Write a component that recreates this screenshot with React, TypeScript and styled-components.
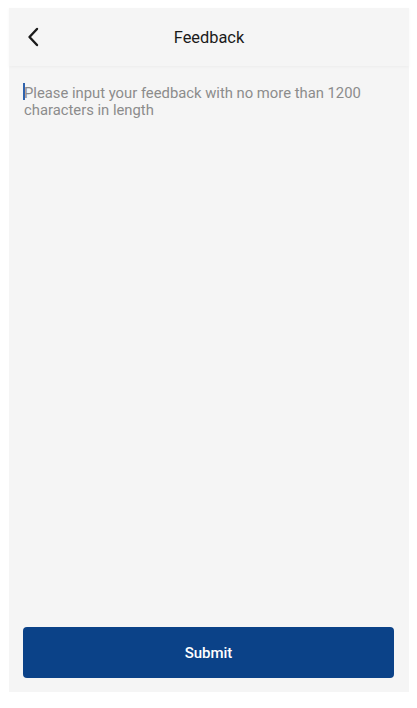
import styled, { createGlobalStyle } from 'styled-components';

const GlobalStyle = createGlobalStyle`
  html, body {
    margin: 0;
    padding: 0;
    background: #ffffff;
  }
  body {
    padding: 8px 8px 16px 9px;
    font-family: Roboto, "Noto Sans", "Liberation Sans", sans-serif;
  }
`;

const Screen = styled.div`
  display: flex;
  flex-direction: column;
  height: 684px;
  background: #f5f5f5;
`;

const Header = styled.div`
  position: relative;
  display: flex;
  align-items: center;
  justify-content: center;
  height: 58px;
  flex-shrink: 0;
  background: #f5f5f5;
  box-shadow: 0 1px 3px rgba(0, 0, 0, 0.04);
`;

const BackButton = styled.button`
  position: absolute;
  left: 12px;
  top: 50%;
  transform: translateY(-50%);
  display: flex;
  align-items: center;
  justify-content: center;
  width: 24px;
  height: 28px;
  padding: 0;
  border: none;
  background: transparent;
  cursor: pointer;
`;

const Title = styled.div`
  font-size: 16.4px;
  color: #1a1a1a;
`;

const Body = styled.div`
  position: relative;
  flex: 1;
  display: flex;
  padding: 19px 15px 0 14px;
`;

// the text cursor sits over the start of the empty field
const Caret = styled.span`
  position: absolute;
  left: 14px;
  top: 17px;
  width: 1.5px;
  height: 17px;
  background: #2f63ad;
  pointer-events: none;
`;

const FeedbackInput = styled.textarea`
  flex: 1;
  resize: none;
  border: none;
  outline: none;
  background: transparent;
  padding: 0 0 0 1px;
  margin: 0;
  font-family: Roboto, "Noto Sans", "Liberation Sans", sans-serif;
  font-size: 14.8px;
  line-height: 17px;
  color: #222;
  caret-color: transparent;
  &::placeholder {
    color: #8c8c8c;
  }
`;

const Footer = styled.div`
  padding: 0 15px 14px 14px;
`;

const SubmitButton = styled.button`
  width: 100%;
  height: 51px;
  border: none;
  border-radius: 4px;
  background: #0b4288;
  color: #ffffff;
  font-family: Roboto, "Noto Sans", "Liberation Sans", sans-serif;
  font-size: 15px;
  font-weight: 500;
  cursor: pointer;
`;

const ChevronLeft = () => (
  <svg width="12" height="20" viewBox="0 0 12 20" fill="none">
    <path
      d="M10 2 L2.5 10 L10 18"
      stroke="#1a1a1a"
      strokeWidth="2.4"
      strokeLinecap="round"
      strokeLinejoin="round"
    />
  </svg>
);

const App = () => (
  <>
    <GlobalStyle />
    <Screen>
      <Header>
        <BackButton aria-label="Back">
          <ChevronLeft />
        </BackButton>
        <Title>Feedback</Title>
      </Header>
      <Body>
        <Caret />
        <FeedbackInput
          maxLength={1200}
          placeholder="Please input your feedback with no more than 1200 characters in length"
        />
      </Body>
      <Footer>
        <SubmitButton>Submit</SubmitButton>
      </Footer>
    </Screen>
  </>
);

export default App;
